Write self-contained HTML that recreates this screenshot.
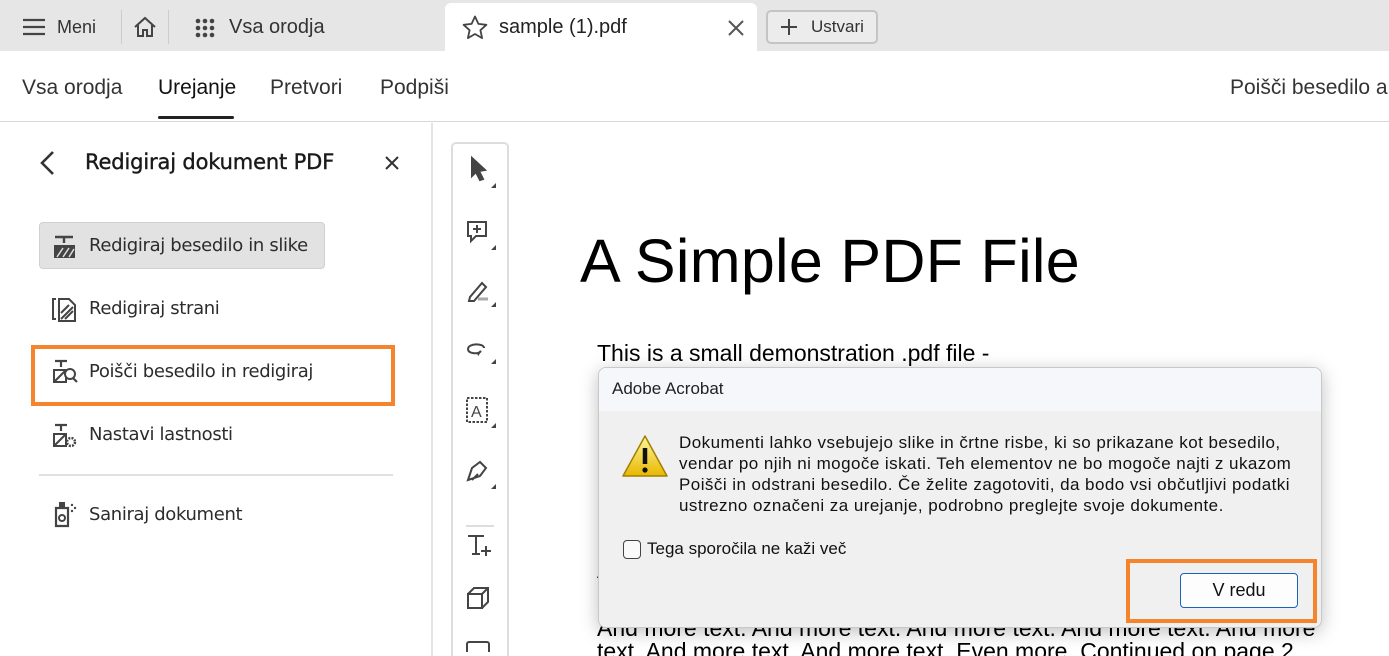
<!DOCTYPE html>
<html style="overflow:hidden;width:1389px;height:656px"><head><meta charset="utf-8"><style>
*{margin:0;padding:0;box-sizing:border-box}
body{width:1389px;height:656px;overflow:hidden;background:#fff;font-family:"Liberation Sans",sans-serif;position:relative;color:#222}
.abs{position:absolute}
#tabs{left:0;top:0;width:1389px;height:51px;background:#e6e6e6}
.t{position:absolute;font-size:18px;color:#333;top:16px}
#sub{top:51px;left:0;width:1389px;height:71px;border-bottom:1px solid #d8d8d8}
.s{position:absolute;font-size:21px;color:#333;top:76px}
.li{position:absolute;font-size:18px;color:#2c2c2c;left:89px;font-family:"DejaVu Sans","Liberation Sans",sans-serif;letter-spacing:-0.35px}
.pdf{position:absolute;font-size:23px;color:#000;left:597px;line-height:24px;white-space:nowrap}
</style></head><body>
<div id="tabs" class="abs">
 <svg class="abs" style="left:22px;top:17px" width="24" height="20"><path d="M1 3h22M1 10h22M1 17h22" stroke="#444" stroke-width="2.2"/></svg>
 <div class="t" style="left:57px;top:17px;font-size:18px">Meni</div>
 <div class="abs" style="left:121px;top:10px;width:1px;height:34px;background:#ccc"></div>
 <svg class="abs" style="left:133px;top:16px" width="24" height="22"><path d="M2 11L12 2l10 9M5 9v11h5v-6h4v6h5V9" fill="none" stroke="#444" stroke-width="2"/></svg>
 <div class="abs" style="left:168px;top:10px;width:1px;height:34px;background:#ccc"></div>
 <svg class="abs" style="left:195px;top:18px" width="20" height="20"><g fill="#444"><circle cx="3" cy="3" r="2.3"/><circle cx="10" cy="3" r="2.3"/><circle cx="17" cy="3" r="2.3"/><circle cx="3" cy="10" r="2.3"/><circle cx="10" cy="10" r="2.3"/><circle cx="17" cy="10" r="2.3"/><circle cx="3" cy="17" r="2.3"/><circle cx="10" cy="17" r="2.3"/><circle cx="17" cy="17" r="2.3"/></g></svg>
 <div class="t" style="left:229px;font-size:20px">Vsa orodja</div>
 <div class="abs" style="left:445px;top:3px;width:312px;height:48px;background:#fff;border-radius:6px 6px 0 0"></div>
 <svg class="abs" style="left:462px;top:15px" width="26" height="25"><path d="M13 1.5l3.4 7.4 8 .9-6 5.4 1.7 7.9L13 19l-7.1 4.1 1.7-7.9-6-5.4 8-.9z" fill="none" stroke="#444" stroke-width="1.8" stroke-linejoin="round"/></svg>
 <div class="t" style="left:499px;font-size:20px;color:#222">sample (1).pdf</div>
 <svg class="abs" style="left:728px;top:20px" width="16" height="16"><path d="M1 1l14 14M15 1L1 15" stroke="#555" stroke-width="2"/></svg>
 <div class="abs" style="left:766px;top:10px;width:112px;height:34px;border:2px solid #c4c4c4;border-radius:5px;background:#ececec"></div>
 <svg class="abs" style="left:780px;top:18px" width="18" height="18"><path d="M9 1v16M1 9h16" stroke="#444" stroke-width="2"/></svg>
 <div class="t" style="left:811px;top:17px;font-size:17px">Ustvari</div>
</div>
<div id="sub" class="abs"></div>
<div class="s" style="left:22px">Vsa orodja</div>
<div class="s" style="left:158px;color:#111">Urejanje</div>
<div class="abs" style="left:158px;top:116px;width:76px;height:3px;background:#222;border-radius:2px"></div>
<div class="s" style="left:270px">Pretvori</div>
<div class="s" style="left:380px">Podpiši</div>
<div class="s" style="left:1230px">Poišči besedilo a</div>
<div class="abs" style="left:431px;top:123px;width:2px;height:533px;background:#e4e4e4"></div>

<svg class="abs" style="left:38px;top:150px" width="18" height="26"><path d="M15 2L4 13l11 11" fill="none" stroke="#333" stroke-width="2.6"/></svg>
<div class="abs" style="left:85px;top:150px;font-size:21px;color:#1a1a1a;font-family:'DejaVu Sans','Liberation Sans',sans-serif;letter-spacing:-0.15px;-webkit-text-stroke:0.4px #1a1a1a">Redigiraj dokument PDF</div>
<svg class="abs" style="left:385px;top:156px" width="14" height="14"><path d="M1 1l12 12M13 1L1 13" stroke="#333" stroke-width="2"/></svg>

<div class="abs" style="left:39px;top:222px;width:286px;height:47px;background:#e2e2e2;border:1px solid #d0d0d0;border-radius:4px"></div>
<svg class="abs" style="left:53px;top:235px" width="24" height="24"><path d="M2 2h18M11 2v6" stroke="#444" stroke-width="2.4"/><rect x="1" y="10" width="21" height="13" fill="#444"/><path d="M4 22l6-9M10 22l6-9M16 22l5-8" stroke="#ddd" stroke-width="1.5"/></svg>
<div class="li" style="top:235px">Redigiraj besedilo in slike</div>
<svg class="abs" style="left:50px;top:296px" width="28" height="28"><path d="M6 3H3v20h3" fill="none" stroke="#444" stroke-width="2"/><path d="M9 3h10l6 6v16H9z" fill="none" stroke="#444" stroke-width="2"/><path d="M11 23l12-12M11 17l8-8M15 23l8-8" stroke="#444" stroke-width="2"/></svg>
<div class="li" style="top:298px">Redigiraj strani</div>
<div class="abs" style="left:31px;top:345px;width:364px;height:61px;border:4px solid #f5842c"></div>
<svg class="abs" style="left:52px;top:358px" width="26" height="28"><path d="M3 3h12M9 3v6" stroke="#444" stroke-width="2.2"/><rect x="2" y="12" width="12" height="12" fill="none" stroke="#444" stroke-width="2"/><path d="M3 23l10-10" stroke="#444" stroke-width="2"/><circle cx="18" cy="16" r="5" fill="#fff" stroke="#444" stroke-width="2"/><path d="M21 20l4 4" stroke="#444" stroke-width="2.2"/></svg>
<div class="li" style="top:361px">Poišči besedilo in redigiraj</div>
<svg class="abs" style="left:52px;top:422px" width="26" height="28"><path d="M3 3h12M9 3v6" stroke="#444" stroke-width="2.2"/><rect x="2" y="12" width="12" height="12" fill="none" stroke="#444" stroke-width="2"/><path d="M3 23l10-10" stroke="#444" stroke-width="2"/><circle cx="19" cy="20" r="4" fill="#fff" stroke="#444" stroke-width="2.5" stroke-dasharray="2 1.2"/></svg>
<div class="li" style="top:424px">Nastavi lastnosti</div>
<div class="abs" style="left:39px;top:474px;width:354px;height:2px;background:#e0e0e0"></div>
<svg class="abs" style="left:52px;top:500px" width="26" height="28"><path d="M4 8h12v18H4z" fill="none" stroke="#444" stroke-width="2.2"/><circle cx="10" cy="18" r="3" fill="none" stroke="#444" stroke-width="2"/><rect x="7" y="2" width="6" height="6" fill="#444"/><g fill="#444"><circle cx="20" cy="5" r="1.2"/><circle cx="23" cy="8" r="1.2"/><circle cx="20" cy="11" r="1.2"/></g></svg>
<div class="li" style="top:504px">Saniraj dokument</div>

<div class="abs" style="left:451px;top:142px;width:58px;height:530px;border:2px solid #ddd;border-radius:5px;background:#fff"></div>
<svg class="abs" style="left:462px;top:152px" width="40" height="500" fill="none" stroke="#444" stroke-width="2">
 <path d="M10 6l13 12-6 1 4 8-3 1-4-8-4 4z" fill="#444"/><path d="M34 36l-5 0 5-5z" fill="#444" stroke="none"/>
 <path d="M6 70h18v14H14l-5 5v-5H6z"/><path d="M15 73v8M11 77h8"/><path d="M34 98h-5l5-5z" fill="#444" stroke="none"/>
 <path d="M8 145l12-14 4 4-12 14H7z"/><path d="M16 147h10" stroke="#aaa" stroke-width="3"/><path d="M34 155h-5l5-5z" fill="#444" stroke="none"/>
 <path d="M22 196c0-5-16-5-16 1 0 5 10 5 12 3s-3 2-1 3"/><path d="M34 212h-5l5-5z" fill="#444" stroke="none"/>
 <rect x="5" y="246" width="20" height="24" stroke-dasharray="2.5 1.5"/><text x="9" y="265" font-family="Liberation Sans" font-size="16" fill="#444" stroke="none">A</text><path d="M34 276h-5l5-5z" fill="#444" stroke="none"/>
 <path d="M6 328l4-12 8-6 6 6-6 8zM10 328l6-6"/><path d="M34 337h-5l5-5z" fill="#444" stroke="none"/>
 <path d="M4 374h28" stroke="#ddd"/>
 <path d="M6 384h16M14 384v18M10 402h8M24 394v10M19 399h10"/>
 <path d="M6 442h14v14H6zM6 442l6-6h14v14l-6 6M20 442l6-6"/>
 <rect x="5" y="490" width="22" height="14" rx="2"/>
</svg>

<div class="abs" style="left:580px;top:226px;font-size:61px;color:#000;letter-spacing:0.3px">A Simple PDF File</div>
<div class="pdf" style="top:341px">This is a small demonstration .pdf file -</div>
<div class="pdf" style="top:534px">r</div>
<div class="pdf" style="top:558px">A</div>
<div class="pdf" style="top:616px">And more text. And more text. And more text. And more text. And more</div>
<div class="pdf" style="top:639px">text. And more text. And more text. Even more. Continued on page 2 ...</div>

<div class="abs" style="left:598px;top:367px;width:724px;height:261px;background:#f0f0f0;border:1px solid #c8c8c8;border-radius:8px;box-shadow:0 4px 18px rgba(0,0,0,.25);overflow:hidden">
 <div style="height:43px;background:#f5f7fa;font-size:17px;color:#222;padding:11px 0 0 13px;font-family:'Liberation Sans',sans-serif">Adobe Acrobat</div>
 <svg class="abs" style="left:22px;top:66px" width="48" height="44"><defs><linearGradient id="g" x1="0" y1="0" x2="0" y2="1"><stop offset="0" stop-color="#fff6a0"/><stop offset="1" stop-color="#e8b800"/></linearGradient></defs><path d="M24 2L46 42H2z" fill="url(#g)" stroke="#a08000" stroke-width="1.5" stroke-linejoin="round"/><path d="M24 14v16" stroke="#111" stroke-width="4.5"/><circle cx="24" cy="36" r="2.6" fill="#111"/></svg>
 <div class="abs" style="left:80px;top:64px;font-size:17px;letter-spacing:0.45px;line-height:21px;color:#111;white-space:nowrap">Dokumenti lahko vsebujejo slike in črtne risbe, ki so prikazane kot besedilo,<br>vendar po njih ni mogoče iskati. Teh elementov ne bo mogoče najti z ukazom<br>Poišči in odstrani besedilo. Če želite zagotoviti, da bodo vsi občutljivi podatki<br>ustrezno označeni za urejanje, podrobno preglejte svoje dokumente.</div>
 <div class="abs" style="left:24px;top:172px;width:18px;height:19px;border:1.5px solid #444;border-radius:4px;background:#fafafa"></div>
 <div class="abs" style="left:48px;top:171px;font-size:17px;color:#111">Tega sporočila ne kaži več</div>
 <div class="abs" style="left:581px;top:205px;width:118px;height:35px;border:1.5px solid #1a63b8;border-radius:4px;background:#fdfdfd;font-size:18px;text-align:center;line-height:32px;color:#111">V redu</div>
</div>
<div class="abs" style="left:1126px;top:559px;width:191px;height:64px;border:4px solid #f5842c"></div>
</body></html>
